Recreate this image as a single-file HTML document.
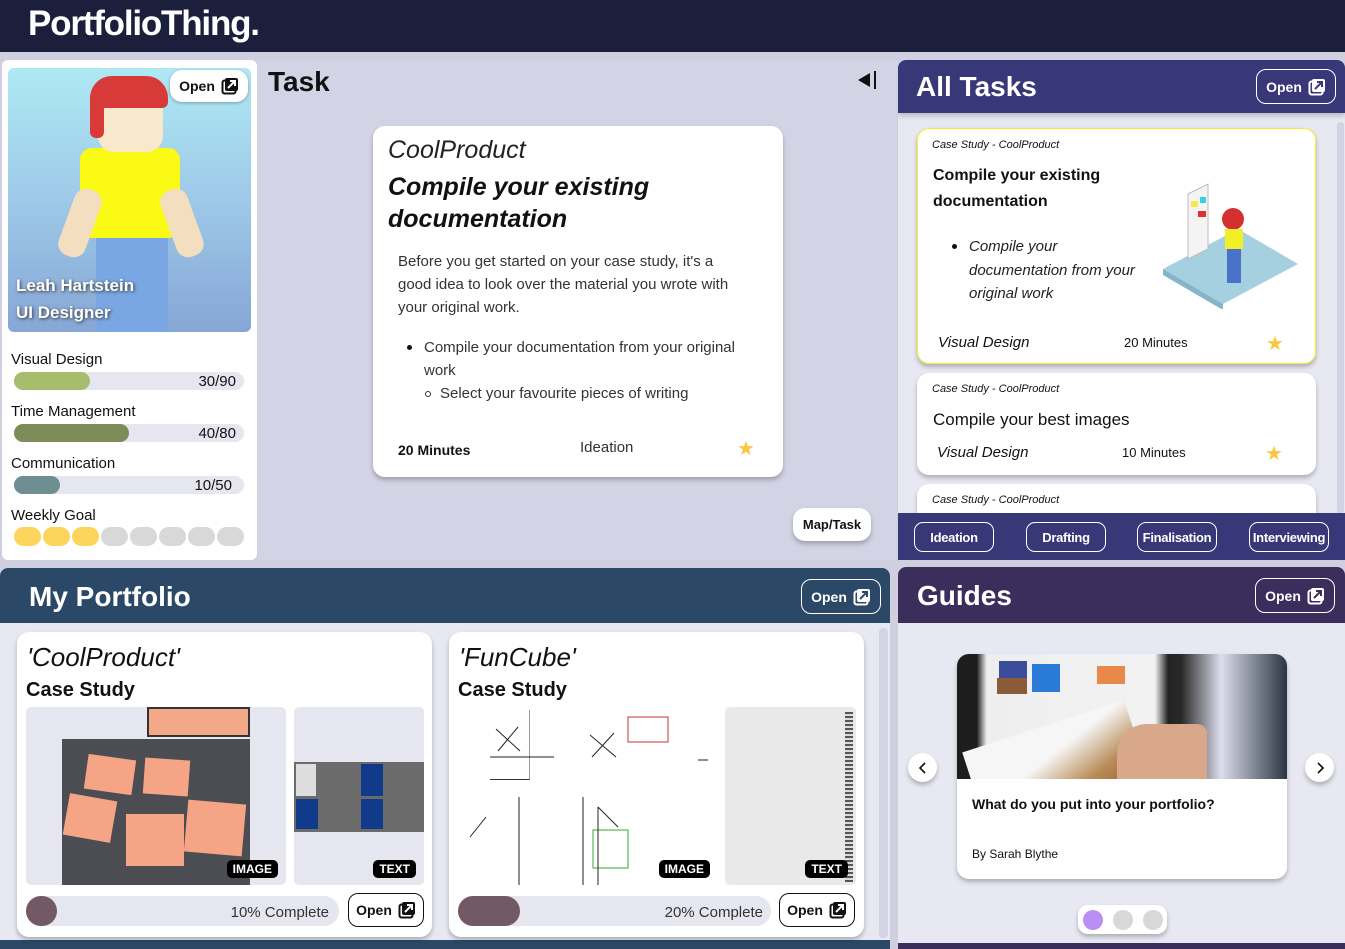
<!DOCTYPE html>
<html><head><meta charset="utf-8"><style>
*{box-sizing:border-box;margin:0;padding:0}
body{width:1345px;height:949px;overflow:hidden;background:#cfcfe0;font-family:"Liberation Sans",sans-serif;position:relative;color:#111}
.a{position:absolute}
.hdr{left:0;top:0;width:1345px;height:52px;background:#1b1f3b}
.logo{left:28px;top:4px;color:#fff;font-size:35px;font-weight:bold;letter-spacing:-1.2px}
.ob{display:flex;align-items:center;gap:6px;justify-content:center;font-weight:bold;font-size:14px;border-radius:10px}
.card{background:#fff;border-radius:12px;box-shadow:0 3px 5px rgba(0,0,0,.25)}
.bar{background:#e6e6f0;border-radius:10px;height:18px}
.fill{height:18px;border-radius:10px;position:absolute;left:0;top:0}
.lbl{font-size:15px}
.pill{border:1.5px solid #fff;border-radius:9px;color:#fff;font-size:13px;font-weight:bold;display:flex;align-items:center;justify-content:center;height:30px;width:80px;top:522px;letter-spacing:-.3px}
.tag{background:#000;color:#fff;font-size:12px;font-weight:bold;border-radius:5px;padding:2px 6px}
</style></head><body>
<div class="a hdr"></div>
<div class="a logo">PortfolioThing.</div>

<!-- Left profile -->
<div class="a" style="left:2px;top:60px;width:255px;height:500px;background:#fff;border-radius:6px"></div>
<div class="a" style="left:8px;top:68px;width:243px;height:264px;border-radius:6px;background:linear-gradient(180deg,#aee9f3 0%,#9ec9e8 50%,#86a6d6 100%);overflow:hidden">
 <div class="a" style="left:88px;top:150px;width:72px;height:120px;background:#7aa7e4;border-radius:14px"></div>
 <div class="a" style="left:72px;top:80px;width:100px;height:90px;background:#fafa14;border-radius:12px"></div>
 <div class="a" style="left:58px;top:120px;width:28px;height:70px;background:#f3dfbf;border-radius:12px;transform:rotate(20deg)"></div>
 <div class="a" style="left:160px;top:120px;width:28px;height:70px;background:#f3dfbf;border-radius:12px;transform:rotate(-20deg)"></div>
 <div class="a" style="left:90px;top:22px;width:65px;height:62px;background:#f8e9cc;border-radius:16px"></div>
 <div class="a" style="left:82px;top:8px;width:78px;height:32px;background:#d83a3a;border-radius:22px 22px 6px 6px"></div>
 <div class="a" style="left:82px;top:30px;width:14px;height:40px;background:#d83a3a;border-radius:6px"></div>
 <div class="a" style="left:8px;top:204px;color:#fff;font-weight:bold;font-size:17px;line-height:27px;text-shadow:1px 1px 3px #333">Leah Hartstein<br>UI Designer</div>
</div>
<div class="a card ob" style="left:170px;top:70px;width:78px;height:32px;box-shadow:0 1px 3px rgba(0,0,0,.3)">Open <svg width="18" height="18" viewBox="0 0 18 18"><rect x="1.5" y="3.5" width="13" height="13" rx="2" fill="none" stroke="#111" stroke-width="2"/><rect x="4" y="1" width="13" height="13" rx="2" fill="#111"/><path d="M7 11 L14 4 M9 4 H14 V9" stroke="#fff" stroke-width="2" fill="none"/></svg></div>

<div class="a lbl" style="left:11px;top:351px">Visual Design</div>
<div class="a bar" style="left:14px;top:372px;width:230px"><div class="fill" style="width:76px;background:#a5bd6c"></div><span class="a" style="right:8px;top:1px;font-size:15px">30/90</span></div>
<div class="a lbl" style="left:11px;top:403px">Time Management</div>
<div class="a bar" style="left:14px;top:424px;width:230px"><div class="fill" style="width:115px;background:#7d8b58"></div><span class="a" style="right:8px;top:1px;font-size:15px">40/80</span></div>
<div class="a lbl" style="left:11px;top:455px">Communication</div>
<div class="a bar" style="left:14px;top:476px;width:230px"><div class="fill" style="width:46px;background:#6e8e92"></div><span class="a" style="right:12px;top:1px;font-size:15px">10/50</span></div>
<div class="a lbl" style="left:11px;top:507px">Weekly Goal</div>
<div class="a" style="left:14px;top:527px;display:flex;gap:2px">
<div style="width:27px;height:19px;border-radius:10px;background:#fdd55c"></div><div style="width:27px;height:19px;border-radius:10px;background:#fdd55c"></div><div style="width:27px;height:19px;border-radius:10px;background:#fdd55c"></div><div style="width:27px;height:19px;border-radius:10px;background:#d8d8d8"></div><div style="width:27px;height:19px;border-radius:10px;background:#d8d8d8"></div><div style="width:27px;height:19px;border-radius:10px;background:#d8d8d8"></div><div style="width:27px;height:19px;border-radius:10px;background:#d8d8d8"></div><div style="width:27px;height:19px;border-radius:10px;background:#d8d8d8"></div></div>

<!-- Task -->
<div class="a" style="left:257px;top:60px;width:640px;height:500px;background:#d3d3e6"></div>
<div class="a" style="left:268px;top:66px;font-size:28px;font-weight:bold">Task</div>
<svg class="a" style="left:856px;top:70px" width="22" height="20" viewBox="0 0 22 20"><path d="M2 10 L14 3 V17 Z" fill="#111"/><rect x="18" y="1" width="2" height="18" fill="#111"/></svg>
<div class="a card" style="left:373px;top:126px;width:410px;height:351px">
 <div class="a" style="left:15px;top:10px;font-size:25px;font-style:italic;color:#222">CoolProduct</div>
 <div class="a" style="left:15px;top:45px;font-size:25px;font-style:italic;font-weight:bold;line-height:32px">Compile your existing<br>documentation</div>
 <div class="a" style="left:25px;top:124px;width:345px;font-size:15px;line-height:23px;color:#333">Before you get started on your case study, it's a good idea to look over the material you wrote with your original work.</div>
 <div class="a" style="left:25px;top:210px;width:370px;font-size:15px;line-height:23px;color:#333">
  <div style="padding-left:26px;position:relative"><span class="a" style="left:9px;top:9px;width:5px;height:5px;border-radius:50%;background:#111"></span>Compile your documentation from your original work</div>
  <div style="padding-left:42px;position:relative"><span class="a" style="left:27px;top:9px;width:6px;height:6px;border-radius:50%;border:1.3px solid #333"></span>Select your favourite pieces of writing</div>
 </div>
 <div class="a" style="left:25px;top:316px;font-size:14px;font-weight:bold">20 Minutes</div>
 <div class="a" style="left:207px;top:313px;font-size:15px;color:#333">Ideation</div>
 <div class="a" style="left:364px;top:310px;font-size:20px;color:#fcc73d">★</div>
</div>
<div class="a card ob" style="left:793px;top:508px;width:78px;height:33px;font-size:13px">Map/Task</div>

<!-- All Tasks -->
<div class="a" style="left:898px;top:60px;width:447px;height:500px;background:#e8e8f2;border-radius:8px 8px 0 0;overflow:hidden">
 <div class="a" style="left:0;top:0;width:447px;height:53px;background:#383778;box-shadow:0 3px 5px rgba(0,0,0,.2)"></div>
 <div class="a" style="left:18px;top:11px;font-size:28px;font-weight:bold;color:#fff">All Tasks</div>
 <div class="a ob" style="left:358px;top:9px;width:80px;height:35px;border:1.5px solid #fff;color:#fff">Open <svg width="18" height="18" viewBox="0 0 18 18"><rect x="1.5" y="3.5" width="13" height="13" rx="2" fill="none" stroke="#fff" stroke-width="2"/><rect x="4" y="1" width="13" height="13" rx="2" fill="#fff"/><path d="M7 11 L14 4 M9 4 H14 V9" stroke="#383778" stroke-width="2" fill="none"/></svg></div>
 <div class="a" style="left:439px;top:62px;width:7px;height:392px;background:#d3d3e6;border-radius:4px"></div>
 <div class="a card" style="left:19px;top:68px;width:399px;height:236px;border:1.5px solid #f5ef2a">
  <div class="a" style="left:14px;top:10px;font-size:11px;font-style:italic">Case Study - CoolProduct</div>
  <div class="a" style="left:15px;top:34px;font-size:16px;font-weight:bold;line-height:26px">Compile your existing<br>documentation</div>
  <div class="a" style="left:51px;top:106px;width:185px;font-size:15px;font-style:italic;line-height:23.5px;color:#222"><span class="a" style="left:-17px;top:9px;width:5px;height:5px;border-radius:50%;background:#111"></span>Compile your documentation from your original work</div>
  <svg class="a" style="left:240px;top:40px" width="150" height="140"><path d="M5 100 L80 60 L140 95 L65 135 Z" fill="#a4d0e0"/><path d="M5 100 L65 135 L65 141 L5 106 Z" fill="#86b4c8"/><path d="M30 25 L50 15 L50 80 L30 90 Z" fill="#f4f4f4" stroke="#bbb"/><rect x="33" y="32" width="7" height="6" fill="#f4e84a"/><rect x="42" y="28" width="6" height="6" fill="#35d0e8"/><rect x="40" y="42" width="8" height="6" fill="#e03030"/><circle cx="75" cy="50" r="11" fill="#d43030"/><rect x="67" y="60" width="18" height="20" fill="#f0ef28"/><rect x="69" y="80" width="14" height="34" fill="#4a72c8"/></svg>
  <div class="a" style="left:20px;top:205px;font-size:15px;font-style:italic">Visual Design</div>
  <div class="a" style="left:206px;top:206px;font-size:13px">20 Minutes</div>
  <div class="a" style="left:348px;top:202px;font-size:20px;color:#fcc73d">★</div>
 </div>
 <div class="a card" style="left:19px;top:313px;width:399px;height:102px">
  <div class="a" style="left:15px;top:10px;font-size:11px;font-style:italic">Case Study - CoolProduct</div>
  <div class="a" style="left:16px;top:37px;font-size:17px">Compile your best images</div>
  <div class="a" style="left:20px;top:71px;font-size:15px;font-style:italic">Visual Design</div>
  <div class="a" style="left:205px;top:72px;font-size:13px">10 Minutes</div>
  <div class="a" style="left:348px;top:68px;font-size:20px;color:#fcc73d">★</div>
 </div>
 <div class="a card" style="left:19px;top:424px;width:399px;height:60px">
  <div class="a" style="left:15px;top:10px;font-size:11px;font-style:italic">Case Study - CoolProduct</div>
 </div>
 <div class="a" style="left:0;top:453px;width:447px;height:47px;background:#383778"></div>
</div>
<div class="a pill" style="left:914px">Ideation</div>
<div class="a pill" style="left:1026px">Drafting</div>
<div class="a pill" style="left:1137px">Finalisation</div>
<div class="a pill" style="left:1249px">Interviewing</div>

<!-- My Portfolio -->
<div class="a" style="left:0;top:568px;width:890px;height:381px;background:#e8e8f2;border-radius:8px 8px 0 0;overflow:hidden">
 <div class="a" style="left:0;top:0;width:890px;height:55px;background:#2b4966"></div>
 <div class="a" style="left:29px;top:13px;font-size:28px;font-weight:bold;color:#fff">My Portfolio</div>
 <div class="a ob" style="left:801px;top:11px;width:80px;height:35px;border:1.5px solid #fff;color:#fff">Open <svg width="18" height="18" viewBox="0 0 18 18"><rect x="1.5" y="3.5" width="13" height="13" rx="2" fill="none" stroke="#fff" stroke-width="2"/><rect x="4" y="1" width="13" height="13" rx="2" fill="#fff"/><path d="M7 11 L14 4 M9 4 H14 V9" stroke="#2b4966" stroke-width="2" fill="none"/></svg></div>
 <div class="a" style="left:879px;top:60px;width:9px;height:310px;background:#d3d3e6;border-radius:4px"></div>
 <div class="a" style="left:0;top:372px;width:890px;height:9px;background:#2b4966"></div>
</div>
<!-- card 1 -->
<div class="a card" style="left:17px;top:632px;width:415px;height:305px">
 <div class="a" style="left:10px;top:10px;font-size:26px;font-style:italic">'CoolProduct'</div>
 <div class="a" style="left:9px;top:47px;font-size:20px;font-weight:bold">Case Study</div>
 <div class="a" style="left:9px;top:75px;width:260px;height:178px;background:#e6e6f0;border-radius:5px;overflow:hidden">
  <div class="a" style="left:121px;top:0;width:103px;height:30px;background:#f3a887;border:2px solid #333"></div>
  <div class="a" style="left:36px;top:32px;width:188px;height:146px;background:#4b4d52"></div>
  <div class="a" style="left:60px;top:50px;width:48px;height:35px;background:#f5a485;transform:rotate(8deg)"></div>
  <div class="a" style="left:118px;top:52px;width:45px;height:36px;background:#f5a485;transform:rotate(4deg)"></div>
  <div class="a" style="left:40px;top:90px;width:48px;height:42px;background:#f5a485;transform:rotate(10deg)"></div>
  <div class="a" style="left:100px;top:107px;width:58px;height:52px;background:#f5a485"></div>
  <div class="a" style="left:160px;top:95px;width:58px;height:52px;background:#f5a485;transform:rotate(5deg)"></div>
  <div class="a tag" style="right:8px;top:153px">IMAGE</div>
 </div>
 <div class="a" style="left:277px;top:75px;width:130px;height:178px;background:#e6e6f0;border-radius:5px;overflow:hidden">
  <div class="a" style="left:0;top:55px;width:130px;height:70px;background:#6b6b6b"></div>
  <div class="a" style="left:2px;top:57px;width:20px;height:32px;background:#ddd"></div>
  <div class="a" style="left:67px;top:57px;width:22px;height:32px;background:#123a8a"></div>
  <div class="a" style="left:2px;top:92px;width:22px;height:30px;background:#123a8a"></div>
  <div class="a" style="left:67px;top:92px;width:22px;height:30px;background:#123a8a"></div>
  <div class="a tag" style="right:8px;top:153px">TEXT</div>
 </div>
 <div class="a bar" style="left:9px;top:264px;width:313px;height:30px;border-radius:15px"><div class="fill" style="width:31px;height:30px;border-radius:15px;background:#735965"></div><span class="a" style="right:10px;top:8px;font-size:15px;color:#333">10% Complete</span></div>
 <div class="a ob" style="left:331px;top:261px;width:76px;height:34px;border:1.5px solid #111">Open <svg width="18" height="18" viewBox="0 0 18 18"><rect x="1.5" y="3.5" width="13" height="13" rx="2" fill="none" stroke="#111" stroke-width="2"/><rect x="4" y="1" width="13" height="13" rx="2" fill="#111"/><path d="M7 11 L14 4 M9 4 H14 V9" stroke="#fff" stroke-width="2" fill="none"/></svg></div>
</div>
<!-- card 2 -->
<div class="a card" style="left:449px;top:632px;width:415px;height:305px">
 <div class="a" style="left:10px;top:10px;font-size:26px;font-style:italic">'FunCube'</div>
 <div class="a" style="left:9px;top:47px;font-size:20px;font-weight:bold">Case Study</div>
 <div class="a" style="left:9px;top:75px;width:260px;height:178px;background:#fff;overflow:hidden">
  <div class="a" style="left:32px;top:3px;width:40px;height:70px;border-right:1px solid #999;border-bottom:1px solid #333"></div>
  <svg class="a" style="left:0;top:0" width="260" height="178"><path d="M38 22 L62 44 M40 44 L60 20 M132 28 L158 50 M134 50 L156 26 M12 130 L28 110 M140 100 L160 120 M32 50 L96 50 M240 53 L250 53" stroke="#222" fill="none"/><rect x="170" y="10" width="40" height="25" fill="none" stroke="#c33"/><rect x="135" y="123" width="35" height="38" fill="none" stroke="#3a3"/><path d="M61 90 V178 M125 90 V178 M140 100 V178" stroke="#222"/></svg>
  <div class="a tag" style="right:8px;top:153px">IMAGE</div>
 </div>
 <div class="a" style="left:276px;top:75px;width:131px;height:178px;background:#e9e9e9;border-radius:5px;overflow:hidden">
  <div class="a" style="left:120px;top:5px;width:8px;height:170px;background:repeating-linear-gradient(#555 0 2px,#ddd 2px 4px)"></div>
  <div class="a tag" style="right:8px;top:153px">TEXT</div>
 </div>
 <div class="a bar" style="left:9px;top:264px;width:313px;height:30px;border-radius:15px"><div class="fill" style="width:62px;height:30px;border-radius:15px;background:#735965"></div><span class="a" style="right:8px;top:8px;font-size:15px;color:#333">20% Complete</span></div>
 <div class="a ob" style="left:330px;top:261px;width:76px;height:34px;border:1.5px solid #111">Open <svg width="18" height="18" viewBox="0 0 18 18"><rect x="1.5" y="3.5" width="13" height="13" rx="2" fill="none" stroke="#111" stroke-width="2"/><rect x="4" y="1" width="13" height="13" rx="2" fill="#111"/><path d="M7 11 L14 4 M9 4 H14 V9" stroke="#fff" stroke-width="2" fill="none"/></svg></div>
</div>

<!-- Guides -->
<div class="a" style="left:898px;top:567px;width:447px;height:382px;background:#e8e8f2;border-radius:8px 8px 0 0;overflow:hidden">
 <div class="a" style="left:0;top:0;width:447px;height:56px;background:#3b2d5c"></div>
 <div class="a" style="left:19px;top:13px;font-size:28px;font-weight:bold;color:#fff">Guides</div>
 <div class="a ob" style="left:357px;top:11px;width:80px;height:35px;border:1.5px solid #fff;color:#fff">Open <svg width="18" height="18" viewBox="0 0 18 18"><rect x="1.5" y="3.5" width="13" height="13" rx="2" fill="none" stroke="#fff" stroke-width="2"/><rect x="4" y="1" width="13" height="13" rx="2" fill="#fff"/><path d="M7 11 L14 4 M9 4 H14 V9" stroke="#3b2d5c" stroke-width="2" fill="none"/></svg></div>
 <div class="a" style="left:0;top:376px;width:447px;height:6px;background:#3b2d5c"></div>
</div>
<div class="a card" style="left:957px;top:654px;width:330px;height:225px;overflow:hidden">
 <div class="a" style="left:0;top:0;width:330px;height:125px;overflow:hidden;background:linear-gradient(90deg,#1d1d1d 0%,#1d1d1d 6%,#eee 9%,#f2f2f2 60%,#222 64%,#2a2a2a 68%,#dde 80%,#2a3540 100%)">
  <div class="a" style="left:42px;top:7px;width:28px;height:20px;background:#3b4c9a"></div>
  <div class="a" style="left:75px;top:10px;width:28px;height:28px;background:#2a7ad8"></div>
  <div class="a" style="left:40px;top:24px;width:30px;height:16px;background:#8a5a3a"></div>
  <div class="a" style="left:140px;top:12px;width:28px;height:18px;background:#e8884a"></div>
  <div class="a" style="left:15px;top:70px;width:170px;height:90px;background:linear-gradient(160deg,#f6f6f6 40%,#b88a55 70%,#8b5a2a);transform:rotate(-18deg)"></div>
  <div class="a" style="left:160px;top:70px;width:90px;height:60px;background:#d9a88a;border-radius:30px 10px 0 0"></div>
 </div>
 <div class="a" style="left:15px;top:142px;font-size:14px;font-weight:bold">What do you put into your portfolio?</div>
 <div class="a" style="left:15px;top:193px;font-size:12px">By Sarah Blythe</div>
</div>
<div class="a card" style="left:908px;top:753px;width:29px;height:29px;border-radius:50%;display:flex;align-items:center;justify-content:center"><svg width="12" height="14"><path d="M8 2 L3 7 L8 12" stroke="#111" stroke-width="1.6" fill="none"/></svg></div>
<div class="a card" style="left:1305px;top:753px;width:29px;height:29px;border-radius:50%;display:flex;align-items:center;justify-content:center"><svg width="12" height="14"><path d="M4 2 L9 7 L4 12" stroke="#111" stroke-width="1.6" fill="none"/></svg></div>
<div class="a card" style="left:1078px;top:905px;width:89px;height:29px;border-radius:10px;display:flex;gap:10px;align-items:center;justify-content:center">
 <div style="width:20px;height:20px;border-radius:50%;background:#bb8ef5"></div><div style="width:20px;height:20px;border-radius:50%;background:#d8d8d8"></div><div style="width:20px;height:20px;border-radius:50%;background:#d8d8d8"></div></div>
</body></html>
